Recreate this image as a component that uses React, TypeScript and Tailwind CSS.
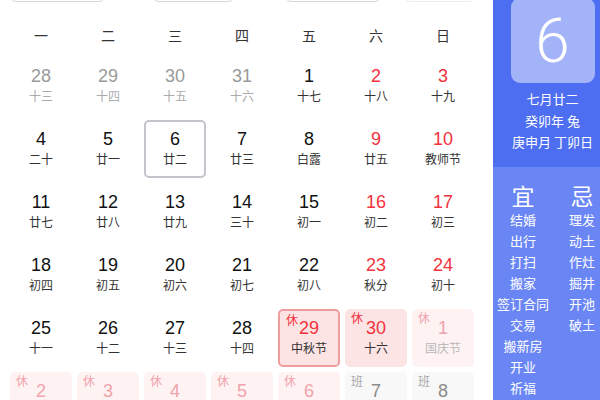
import React from "react";

type Kind = "prev" | "norm" | "red" | "sel" | "restOn" | "rest" | "restNext" | "work";

type Cell = { d: string; l: string; k: Kind };

const rows: Cell[][] = [
  [
    { d: "28", l: "十三", k: "prev" },
    { d: "29", l: "十四", k: "prev" },
    { d: "30", l: "十五", k: "prev" },
    { d: "31", l: "十六", k: "prev" },
    { d: "1", l: "十七", k: "norm" },
    { d: "2", l: "十八", k: "red" },
    { d: "3", l: "十九", k: "red" },
  ],
  [
    { d: "4", l: "二十", k: "norm" },
    { d: "5", l: "廿一", k: "norm" },
    { d: "6", l: "廿二", k: "sel" },
    { d: "7", l: "廿三", k: "norm" },
    { d: "8", l: "白露", k: "norm" },
    { d: "9", l: "廿五", k: "red" },
    { d: "10", l: "教师节", k: "red" },
  ],
  [
    { d: "11", l: "廿七", k: "norm" },
    { d: "12", l: "廿八", k: "norm" },
    { d: "13", l: "廿九", k: "norm" },
    { d: "14", l: "三十", k: "norm" },
    { d: "15", l: "初一", k: "norm" },
    { d: "16", l: "初二", k: "red" },
    { d: "17", l: "初三", k: "red" },
  ],
  [
    { d: "18", l: "初四", k: "norm" },
    { d: "19", l: "初五", k: "norm" },
    { d: "20", l: "初六", k: "norm" },
    { d: "21", l: "初七", k: "norm" },
    { d: "22", l: "初八", k: "norm" },
    { d: "23", l: "秋分", k: "red" },
    { d: "24", l: "初十", k: "red" },
  ],
  [
    { d: "25", l: "十一", k: "norm" },
    { d: "26", l: "十二", k: "norm" },
    { d: "27", l: "十三", k: "norm" },
    { d: "28", l: "十四", k: "norm" },
    { d: "29", l: "中秋节", k: "restOn" },
    { d: "30", l: "十六", k: "rest" },
    { d: "1", l: "国庆节", k: "restNext" },
  ],
  [
    { d: "2", l: "十八", k: "restNext" },
    { d: "3", l: "十九", k: "restNext" },
    { d: "4", l: "二十", k: "restNext" },
    { d: "5", l: "廿一", k: "restNext" },
    { d: "6", l: "廿二", k: "restNext" },
    { d: "7", l: "廿三", k: "work" },
    { d: "8", l: "廿四", k: "work" },
  ],
];

const weekdays = ["一", "二", "三", "四", "五", "六", "日"];
const good = ["结婚", "出行", "打扫", "搬家", "签订合同", "交易", "搬新房", "开业", "祈福"];
const bad = ["理发", "动土", "作灶", "掘井", "开池", "破土"];

const boxStyle: Record<Kind, string> = {
  prev: "",
  norm: "",
  red: "",
  sel: "border-2 border-[#c4c5cc]",
  restOn: "border-2 border-[#ee9d9f] bg-[#fde4e4]",
  rest: "bg-[#fde4e4]",
  restNext: "bg-[#fef2f3]",
  work: "bg-[#f8f8f8]",
};

const numColor: Record<Kind, string> = {
  prev: "text-[#9a9a9a]",
  norm: "text-[#111]",
  red: "text-[#f2323c]",
  sel: "text-[#111]",
  restOn: "text-[#f2323c]",
  rest: "text-[#f2323c]",
  restNext: "text-[#f1a3ab]",
  work: "text-[#8a8a8a]",
};

const lunarColor: Record<Kind, string> = {
  prev: "text-[#ababab]",
  norm: "text-[#333]",
  red: "text-[#333]",
  sel: "text-[#333]",
  restOn: "text-[#333]",
  rest: "text-[#333]",
  restNext: "text-[#b9b9b9]",
  work: "text-[#b9b9b9]",
};

function DayCell({ c }: { c: Cell }) {
  const tag =
    c.k === "restOn" || c.k === "rest" ? (
      <span className="absolute left-[6px] top-[2px] text-[12px] leading-[14px] text-[#f2323c]">休</span>
    ) : c.k === "restNext" ? (
      <span className="absolute left-[6px] top-[2px] text-[12px] leading-[14px] text-[#f1a3ab]">休</span>
    ) : c.k === "work" ? (
      <span className="absolute left-[6px] top-[2px] text-[12px] leading-[14px] text-[#a8a8a8]">班</span>
    ) : null;
  const pad = c.k === "sel" || c.k === "restOn" ? "pt-[6px]" : "pt-[8px]";
  return (
    <div className={`relative h-[58px] rounded-[5px] flex flex-col items-center ${pad} ${boxStyle[c.k]}`}>
      {tag}
      <div className={`text-[18px] leading-[22px] font-['Liberation_Sans',Arial,sans-serif] ${numColor[c.k]}`}>{c.d}</div>
      <div className={`mt-[1px] text-[12px] leading-[16px] ${lunarColor[c.k]}`}>{c.l}</div>
    </div>
  );
}

export default function App() {
  return (
    <div className="flex w-[600px] h-[400px] overflow-hidden bg-white font-['Noto_Sans_CJK_SC','Liberation_Sans',sans-serif]">
      <div className="w-[493px] shrink-0 pl-[10px]">
        <div className="-mt-[28px] h-[30px] flex">
          <div className="w-[95px] h-[30px] rounded-[6px] border border-[#d6d6d6] bg-white" />
          <div className="ml-[48px] w-[81px] h-[30px] rounded-[6px] border border-[#d6d6d6] bg-white" />
          <div className="ml-[51px] w-[96px] h-[30px] rounded-[6px] border border-[#d6d6d6] bg-white" />
          <div className="ml-[23px] w-[71px] h-[30px] rounded-[6px] border border-[#ececec] bg-white" />
        </div>
        <div className="mt-[20px] grid grid-cols-[repeat(7,62px)] gap-x-[5px] h-[26px]">
          {weekdays.map((w) => (
            <div key={w} className="text-center text-[14px] leading-[26px] text-[#333]">
              {w}
            </div>
          ))}
        </div>
        <div className="mt-[9px] grid grid-cols-[repeat(7,62px)] gap-x-[5px] gap-y-[5px]">
          {rows.flat().map((c, i) => (
            <DayCell key={i} c={c} />
          ))}
        </div>
      </div>
      <div className="w-[107px] shrink-0 flex flex-col text-white">
        <div className="h-[167px] bg-[#4e6ef2] pl-[12px] flex flex-col items-center">
          <div className="-mt-[2px] w-[84px] h-[85px] rounded-[9px] bg-[#a2b3f8] flex items-center justify-center">
            <span className="text-[62px] leading-[62px] font-light font-['Roboto','Liberation_Sans',sans-serif]">6</span>
          </div>
          <div className="mt-[5px] text-[13px] leading-[21.5px] text-center whitespace-nowrap">
            <div>七月廿二</div>
            <div>癸卯年 兔</div>
            <div>庚申月 丁卯日</div>
          </div>
        </div>
        <div className="flex-1 bg-[#6a86f5] flex pt-[15px]">
          <div className="w-[60px] shrink-0 flex flex-col items-center">
            <div className="text-[23px] leading-[27px]">宜</div>
            {good.map((g) => (
              <div key={g} className="text-[13px] leading-[21px] whitespace-nowrap">
                {g}
              </div>
            ))}
          </div>
          <div className="w-[58px] shrink-0 flex flex-col items-center">
            <div className="text-[23px] leading-[27px]">忌</div>
            {bad.map((g) => (
              <div key={g} className="text-[13px] leading-[21px] whitespace-nowrap">
                {g}
              </div>
            ))}
          </div>
        </div>
      </div>
    </div>
  );
}
